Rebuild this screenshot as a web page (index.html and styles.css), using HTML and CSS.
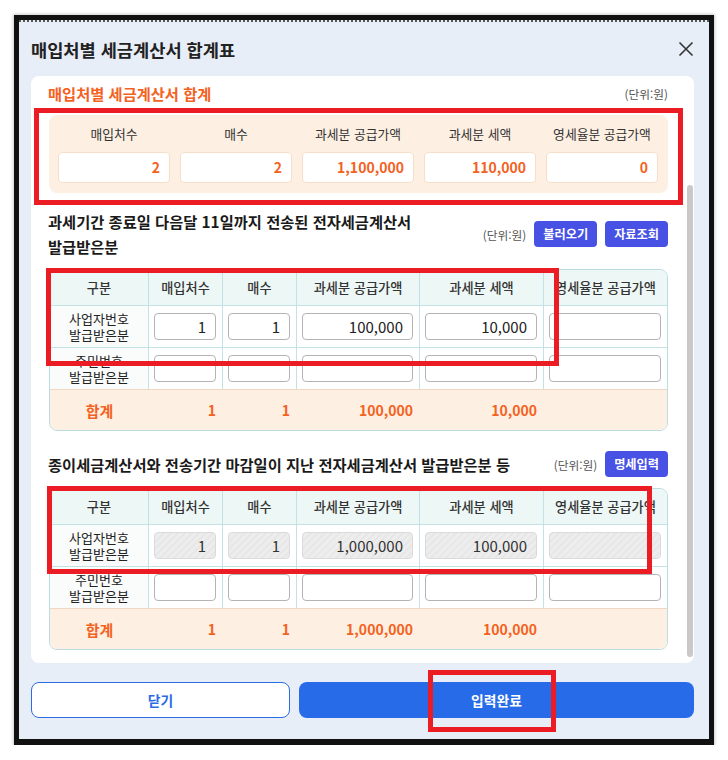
FILE: index.html
```html
<!DOCTYPE html>
<html lang="ko">
<head>
  <meta charset="UTF-8" />
  <meta name="viewport" content="width=device-width, initial-scale=1.0"/>
  <title>매입처별 세금계산서 합계표</title>
  <link rel="stylesheet" href="styles.css">
</head>
<body>
  <div class="frame">
    <div class="modal">
      <div class="modal-head">
        <h1>매입처별 세금계산서 합계표</h1>
        <button class="close-btn" aria-label="닫기">
          <svg width="16" height="16" viewBox="0 0 16 16">
            <path d="M1.5 1.5 L14.5 14.5 M14.5 1.5 L1.5 14.5" stroke="#333" stroke-width="1.6" fill="none"/>
          </svg>
        </button>
      </div>

      <div class="card">
        <div class="card-body">
          <!-- 합계 요약 -->
          <div class="sec-head">
            <h2 class="sec-title orange">매입처별 세금계산서 합계</h2>
            <span class="unit">(단위:원)</span>
          </div>
          <div class="summary">
            <div class="sum-item"><div class="sum-label">매입처수</div><div class="sum-value">2</div></div>
            <div class="sum-item"><div class="sum-label">매수</div><div class="sum-value">2</div></div>
            <div class="sum-item"><div class="sum-label">과세분 공급가액</div><div class="sum-value">1,100,000</div></div>
            <div class="sum-item"><div class="sum-label">과세분 세액</div><div class="sum-value">110,000</div></div>
            <div class="sum-item"><div class="sum-label">영세율분 공급가액</div><div class="sum-value">0</div></div>
          </div>

          <!-- 전자세금계산서 -->
          <div class="sec-head tall">
            <h2 class="sec-title">과세기간 종료일 다음달 11일까지 전송된 전자세금계산서 발급받은분</h2>
            <div class="sec-tools">
              <span class="unit">(단위:원)</span>
              <button class="btn-indigo">불러오기</button>
              <button class="btn-indigo">자료조회</button>
            </div>
          </div>
          <div class="grid-table">
            <div class="th">구분</div>
            <div class="th">매입처수</div>
            <div class="th">매수</div>
            <div class="th">과세분 공급가액</div>
            <div class="th">과세분 세액</div>
            <div class="th">영세율분 공급가액</div>

            <div class="td label">사업자번호<br>발급받은분</div>
            <div class="td"><input class="field" value="1"></div>
            <div class="td"><input class="field" value="1"></div>
            <div class="td"><input class="field" value="100,000"></div>
            <div class="td"><input class="field" value="10,000"></div>
            <div class="td"><input class="field" value=""></div>

            <div class="td label">주민번호<br>발급받은분</div>
            <div class="td"><input class="field" value=""></div>
            <div class="td"><input class="field" value=""></div>
            <div class="td"><input class="field" value=""></div>
            <div class="td"><input class="field" value=""></div>
            <div class="td"><input class="field" value=""></div>

            <div class="tot label">합계</div>
            <div class="tot">1</div>
            <div class="tot">1</div>
            <div class="tot">100,000</div>
            <div class="tot">10,000</div>
            <div class="tot"></div>
          </div>

          <!-- 종이세금계산서 등 -->
          <div class="sec-head gap-top">
            <h2 class="sec-title">종이세금계산서와 전송기간 마감일이 지난 전자세금계산서 발급받은분 등</h2>
            <div class="sec-tools">
              <span class="unit">(단위:원)</span>
              <button class="btn-indigo">명세입력</button>
            </div>
          </div>
          <div class="grid-table">
            <div class="th">구분</div>
            <div class="th">매입처수</div>
            <div class="th">매수</div>
            <div class="th">과세분 공급가액</div>
            <div class="th">과세분 세액</div>
            <div class="th">영세율분 공급가액</div>

            <div class="td label">사업자번호<br>발급받은분</div>
            <div class="td"><input class="field locked" value="1" readonly></div>
            <div class="td"><input class="field locked" value="1" readonly></div>
            <div class="td"><input class="field locked" value="1,000,000" readonly></div>
            <div class="td"><input class="field locked" value="100,000" readonly></div>
            <div class="td"><input class="field locked" value="" readonly></div>

            <div class="td label">주민번호<br>발급받은분</div>
            <div class="td"><input class="field" value=""></div>
            <div class="td"><input class="field" value=""></div>
            <div class="td"><input class="field" value=""></div>
            <div class="td"><input class="field" value=""></div>
            <div class="td"><input class="field" value=""></div>

            <div class="tot label">합계</div>
            <div class="tot">1</div>
            <div class="tot">1</div>
            <div class="tot">1,000,000</div>
            <div class="tot">100,000</div>
            <div class="tot"></div>
          </div>
        </div>
        <div class="scrollbar"></div>
      </div>

      <div class="modal-foot">
        <button class="btn-close">닫기</button>
        <button class="btn-done">입력완료</button>
      </div>
    </div>
  </div>

  <!-- 강조 표시 -->
  <div class="mark mark-1"></div>
  <div class="mark mark-2"></div>
  <div class="mark mark-3"></div>
  <div class="mark mark-4"></div>
</body>
</html>
```

FILE: styles.css
```css
body {
  margin: 0;
  background: #fff;
  font-family: "Noto Sans CJK KR", "Noto Sans", sans-serif;
  color: #222;
}

.frame {
  box-sizing: border-box;
  width: 700px;
  height: 730px;
  margin: 15px 0 0 14px;
  border: 5px solid #111;
  border-bottom-width: 6px;
  box-shadow: 0 0 3px 1px rgba(0, 0, 0, 0.2);
}

.modal {
  box-sizing: border-box;
  height: 100%;
  background: #e8eef8;
  border-top: 2px dotted #555;
  padding: 0 15px 0 12px;
  display: flex;
  flex-direction: column;
}

.modal-head {
  height: 54px;
  display: flex;
  align-items: center;
  justify-content: space-between;
}

.modal-head h1 {
  margin: 0;
  font-size: 17.6px;
  font-weight: 700;
  color: #222;
}

.close-btn {
  border: none;
  background: none;
  padding: 0;
  display: flex;
  cursor: pointer;
}

.card {
  height: 587px;
  background: #fff;
  border-radius: 8px;
  display: flex;
  overflow: hidden;
}

.card-body {
  flex: 1;
  padding: 5px 19px 0 18px;
}

.scrollbar {
  width: 6px;
  height: 472px;
  margin: 109px 1px 0 0;
  background: #c9c9c9;
  border-radius: 3px;
}

.sec-head {
  display: flex;
  align-items: center;
  justify-content: space-between;
  height: 24px;
}

.sec-head.tall {
  height: auto;
  margin-top: 16px;
}

.sec-head.gap-top {
  height: 26px;
  margin-top: 20px;
}

.sec-title {
  flex: 1;
  margin: 0 0 0 -1px;
  padding-right: 30px;
  font-size: 15.3px;
  font-weight: 700;
  line-height: 25px;
  color: #1a1a1a;
  word-break: keep-all;
}

.sec-title.orange { color: #f4621f; }

.unit {
  font-size: 11.7px;
  color: #555;
}

.sec-tools {
  display: flex;
  align-items: center;
  gap: 8px;
  flex-shrink: 0;
}

.btn-indigo {
  height: 26px;
  padding: 0 9px;
  border: none;
  border-radius: 4px;
  background: #4751e4;
  color: #fff;
  font-family: inherit;
  font-size: 12.2px;
  font-weight: 700;
  cursor: pointer;
}

/* 합계 요약 */
.summary {
  margin-top: 10px;
  background: #fdf0e3;
  border-radius: 8px;
  padding: 10px 10px 10px 9px;
  display: grid;
  grid-template-columns: repeat(5, 1fr);
  column-gap: 10px;
}

.sum-label {
  text-align: center;
  font-size: 12.8px;
  line-height: 18px;
  color: #333;
  margin-bottom: 9px;
}

.sum-value {
  box-sizing: border-box;
  height: 31px;
  background: #fff;
  border: 1px solid #f6dfca;
  border-radius: 4px;
  padding-right: 9px;
  text-align: right;
  font-size: 14px;
  font-weight: 700;
  line-height: 29px;
  color: #f4621f;
}

/* 입력 표 */
.grid-table {
  margin-top: 10px;
  display: grid;
  grid-template-columns: 99px 74px 74px 123px 124px 1fr;
  border: 1px solid #b9dde1;
  border-radius: 8px;
  overflow: hidden;
}

.sec-head.gap-top + .grid-table { margin-top: 11px; }

.grid-table > div {
  box-sizing: border-box;
  border-right: 1px solid #c3e2e5;
  border-bottom: 1px solid #c3e2e5;
  display: flex;
  align-items: center;
  justify-content: center;
}

.grid-table > div:nth-child(6n) { border-right: none; }

.th {
  height: 36px;
  background: #edf7f6;
  font-size: 13.2px;
  font-weight: 500;
  color: #333;
}

.td {
  height: 42px;
  padding: 0 6px 0 5px;
}

.td.label {
  padding: 0;
  background: #fafbfb;
  font-size: 13px;
  line-height: 16px;
  text-align: center;
  color: #222;
}

.grid-table > .tot {
  height: 41px;
  margin-top: -1px;
  border-top: 1px solid #efd7c3;
  border-right: none;
  border-bottom: none;
  background: #fdf0e3;
  justify-content: flex-end;
  padding-right: 7px;
  font-size: 14px;
  font-weight: 700;
  color: #f4621f;
}

.grid-table > .tot.label {
  justify-content: center;
  padding-right: 0;
  font-size: 15px;
}

.field {
  box-sizing: border-box;
  width: 100%;
  height: 27px;
  border: 1px solid #b4b4b4;
  border-radius: 4px;
  background: #fff;
  padding: 0 9px 0 4px;
  text-align: right;
  font-family: inherit;
  font-size: 15px;
  color: #222;
  outline: none;
}

.field.locked {
  border-color: #dadada;
  background: repeating-linear-gradient(-45deg, #ededed 0 3px, #e7e7e7 3px 5px);
  color: #333;
}

/* 하단 버튼 */
.modal-foot {
  margin-top: 19px;
  display: grid;
  grid-template-columns: 259px 1fr;
  gap: 9px;
}

.btn-close, .btn-done {
  height: 36px;
  border-radius: 8px;
  font-family: inherit;
  font-size: 13.8px;
  font-weight: 700;
  cursor: pointer;
}

.btn-close {
  background: #fff;
  border: 1px solid #2b6ce6;
  color: #2b6ce6;
}

.btn-done {
  background: #276be8;
  border: none;
  color: #fff;
}

.mark {
  position: absolute;
  box-sizing: border-box;
  border: 5px solid #ec1c24;
}

.mark-1 { left: 34px; top: 108px; width: 649px; height: 97px; }
.mark-2 { left: 46px; top: 268px; width: 513px; height: 98px; }
.mark-3 { left: 47px; top: 486px; width: 605px; height: 88px; }
.mark-4 { left: 428px; top: 670px; width: 128px; height: 62px; }
```
